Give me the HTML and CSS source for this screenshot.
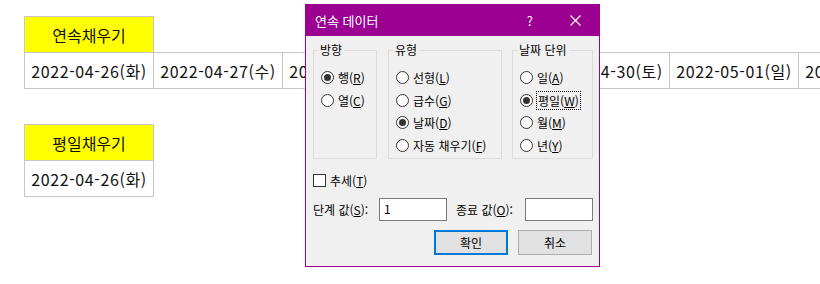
FILE: index.html
```html
<!DOCTYPE html>
<html lang="ko">
<head>
    <meta charset="UTF-8">
    <title>연속 데이터</title>
    <link rel="stylesheet" href="styles.css">
</head>
<body>
    <div class="sheet">
        <div class="block first">
            <div class="row">
                <div class="cell head">연속채우기</div>
            </div>
            <div class="row data">
                <div class="cell">2022-04-26(화)</div>
                <div class="cell">2022-04-27(수)</div>
                <div class="cell">2022-04-28(목)</div>
                <div class="cell">2022-04-29(금)</div>
                <div class="cell">2022-04-30(토)</div>
                <div class="cell">2022-05-01(일)</div>
                <div class="cell">2022-05-02(월)</div>
            </div>
        </div>

        <div class="block second">
            <div class="row">
                <div class="cell head">평일채우기</div>
            </div>
            <div class="row data">
                <div class="cell">2022-04-26(화)</div>
            </div>
        </div>
    </div>

    <div class="dialog">
        <div class="titlebar">
            <span class="title">연속 데이터</span>
            <span class="help">?</span>
            <svg class="close" width="11" height="11" viewBox="0 0 11 11">
                <path d="M0.5 0.5 L10.5 10.5 M10.5 0.5 L0.5 10.5" stroke="#fff" stroke-width="1.2" fill="none"/>
            </svg>
        </div>
        <div class="dialog-body">
            <div class="groups">
                <fieldset class="group g-dir">
                    <legend>방향</legend>
                    <div class="opt"><span class="radio on"></span>행(<u>R</u>)</div>
                    <div class="opt"><span class="radio"></span>열(<u>C</u>)</div>
                </fieldset>
                <fieldset class="group g-type">
                    <legend>유형</legend>
                    <div class="opt"><span class="radio"></span>선형(<u>L</u>)</div>
                    <div class="opt"><span class="radio"></span>급수(<u>G</u>)</div>
                    <div class="opt"><span class="radio on"></span>날짜(<u>D</u>)</div>
                    <div class="opt"><span class="radio"></span>자동 채우기(<u>F</u>)</div>
                </fieldset>
                <fieldset class="group g-unit">
                    <legend>날짜 단위</legend>
                    <div class="opt"><span class="radio"></span>일(<u>A</u>)</div>
                    <div class="opt"><span class="radio on"></span><span class="focus">평일(<u>W</u>)</span></div>
                    <div class="opt"><span class="radio"></span>월(<u>M</u>)</div>
                    <div class="opt"><span class="radio"></span>년(<u>Y</u>)</div>
                </fieldset>
            </div>

            <div class="trend"><span class="check"></span>추세(<u>T</u>)</div>

            <div class="values">
                <label class="lbl-step">단계 값(<u>S</u>):</label>
                <div class="field">1</div>
                <label class="lbl-stop">종료 값(<u>O</u>):</label>
                <div class="field"></div>
            </div>

            <div class="buttons">
                <button class="btn primary">확인</button>
                <button class="btn">취소</button>
            </div>
        </div>
    </div>
</body>
</html>
```

FILE: styles.css
```css
body {
    margin: 0;
    background: #fff;
    font-family: "Noto Sans CJK KR", "Noto Sans", sans-serif;
    color: #111;
    overflow: hidden;
}
.sheet {
    padding-left: 24px;
}
.block.first {
    padding-top: 16px;
}
.block.second {
    padding-top: 35px;
}
.row {
    display: flex;
}
.row.data {
    margin-top: -1px;
}
.cell {
    flex-shrink: 0;
    box-sizing: border-box;
    width: 130px;
    height: 37px;
    margin-right: -1px;
    border: 1px solid #c6c6c6;
    display: flex;
    align-items: center;
    justify-content: center;
    font-size: 16px;
    letter-spacing: 0.6px;
    white-space: nowrap;
}
.cell.head {
    background: #ffff00;
    letter-spacing: 0;
}

.dialog {
    position: absolute;
    left: 305px;
    top: 4px;
    width: 295px;
    height: 263px;
    box-sizing: border-box;
    border: 1px solid #9b0091;
    background: #f0f0f0;
    font-size: 12px;
    color: #000;
}
.titlebar {
    height: 31px;
    background: #9b0091;
    color: #fff;
    display: flex;
    align-items: center;
    padding-left: 9px;
    font-size: 13px;
}
.titlebar .title {
    flex: 1;
}
.titlebar .help {
    margin-right: 37px;
    font-size: 13px;
}
.titlebar .close {
    margin-right: 18px;
}
.dialog-body {
    padding: 6px 6px 0 7px;
}
.groups {
    display: flex;
    gap: 11px;
}
fieldset.group {
    box-sizing: border-box;
    margin: 0;
    padding: 8px 0 0 7px;
    border: 1px solid #dcdcdc;
    height: 117px;
}
legend {
    margin-left: -3px;
    padding: 0 2px;
    line-height: 16px;
    font-size: 12px;
}
.g-dir {
    width: 64px;
}
.g-type {
    width: 114px;
}
.g-unit {
    width: 81px;
    margin-left: -1px !important;
}
.opt {
    display: flex;
    align-items: center;
    height: 22.7px;
    white-space: nowrap;
}
.radio {
    box-sizing: border-box;
    width: 13px;
    height: 13px;
    border: 1px solid #333;
    border-radius: 50%;
    background: #fff;
    margin-right: 4px;
    display: flex;
    align-items: center;
    justify-content: center;
}
.radio.on::after {
    content: "";
    width: 7px;
    height: 7px;
    border-radius: 50%;
    background: #333;
}
.focus {
    outline: 1px dotted #000;
    outline-offset: 0;
    padding: 0 1px;
}
u {
    text-underline-offset: 1px;
}
.trend {
    display: flex;
    align-items: center;
    margin-top: 13px;
    height: 16px;
}
.check {
    box-sizing: border-box;
    width: 13px;
    height: 13px;
    border: 1px solid #333;
    background: #fff;
    margin-right: 4px;
}
.values {
    display: flex;
    align-items: center;
    margin-top: 10px;
}
.lbl-step {
    width: 66px;
}
.lbl-stop {
    margin-left: 9px;
    width: 69px;
}
.field {
    box-sizing: border-box;
    width: 68px;
    height: 23px;
    border: 1px solid #7a7a7a;
    background: #fff;
    padding-left: 4px;
    line-height: 20px;
    font-size: 12px;
}
.buttons {
    display: flex;
    justify-content: flex-end;
    gap: 10px;
    margin-top: 9px;
    padding-right: 1px;
}
.btn {
    box-sizing: border-box;
    width: 74px;
    height: 25px;
    background: #e1e1e1;
    border: 1px solid #adadad;
    font-family: inherit;
    font-size: 12px;
    color: #000;
    padding: 0;
}
.btn.primary {
    border: 2px solid #0078d7;
}
```
